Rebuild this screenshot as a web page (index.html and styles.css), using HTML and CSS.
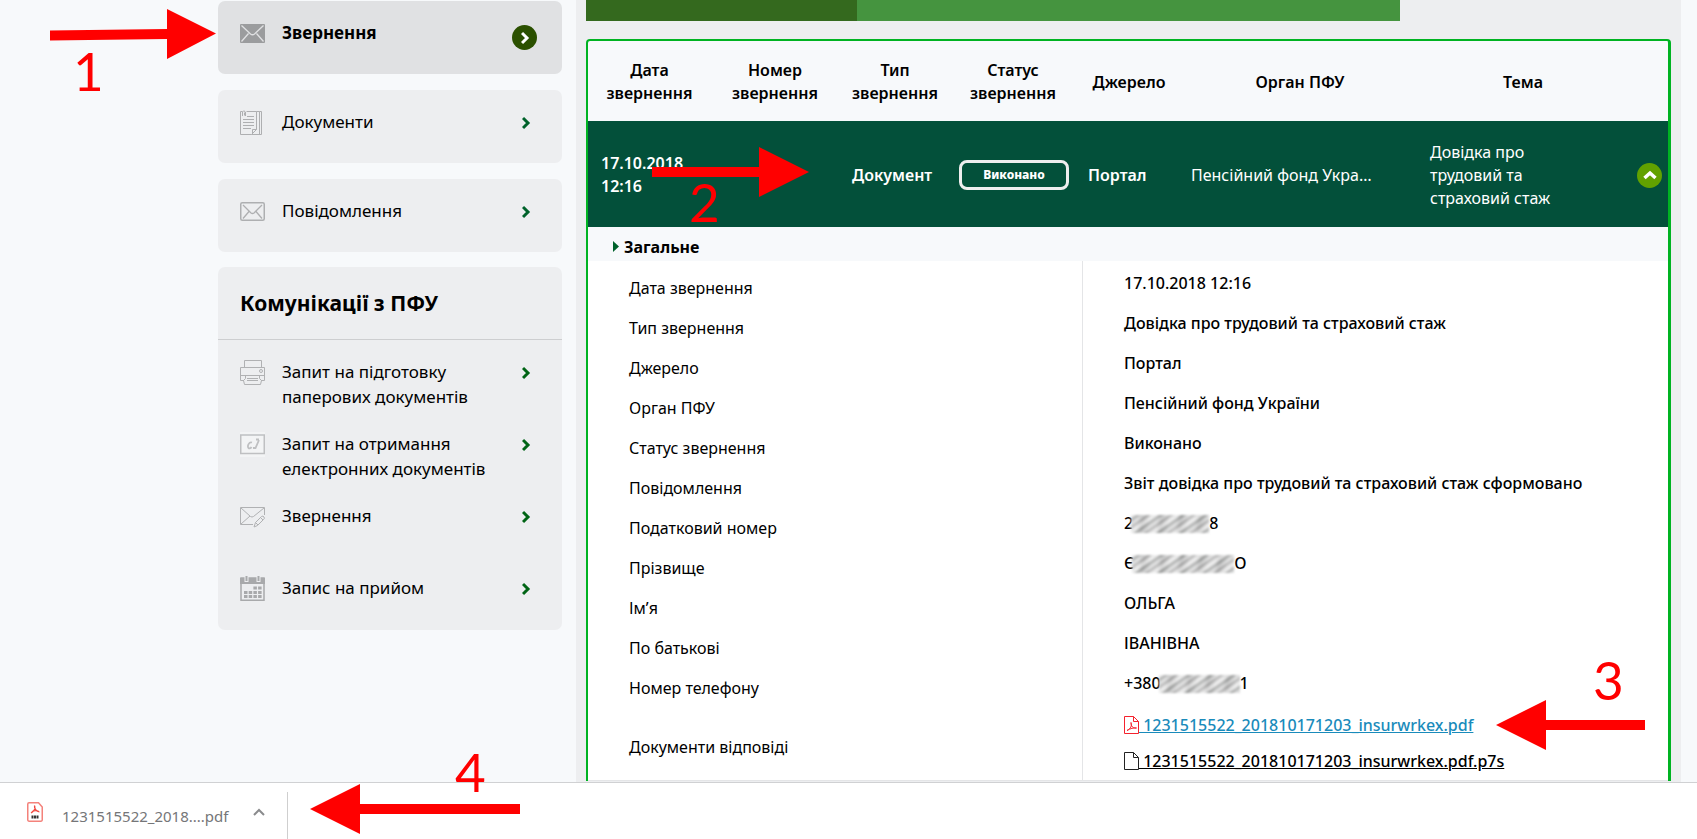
FILE: index.html
```html
<!DOCTYPE html>
<html lang="uk">
<head>
  <meta charset="UTF-8">
  <meta name="viewport" content="width=device-width, initial-scale=1.0">
  <title>Звернення</title>
  <link rel="stylesheet" href="styles.css">
</head>
<body>
  <div class="page">
    <aside class="sidebar">
      <nav class="menu">
        <a href="#" class="menu-card active">
          <svg class="icon" viewBox="0 0 25 25" width="25" height="25"><rect y="3" width="25" height="19" rx="1" fill="#9b9c9e"/><path d="M1.500 4.500l9 8.500q2 1.500 4 0l9-8.500M1.500 20.500l7-8M23.500 20.500l-7-8" fill="none" stroke="#e0e1e3" stroke-width="1.300"/></svg>
          <span class="label">Звернення</span>
          <span class="go round"><svg viewBox="0 0 9 14" width="9" height="14"><path d="M1 2l5 5-5 5" fill="none" stroke="#fff" stroke-width="3"/></svg></span>
        </a>
        <a href="#" class="menu-card">
          <svg class="icon" viewBox="0 0 25 25" width="25" height="25" fill="none" stroke="#aeafb1"><path d="M2.500 1.500h-2v23h11l5-5v-18H6.500"/><path d="M16.500 1.500h3v23h-8M19.500 1.500h2v23h-3M12.500 24v-4.500h4"/><path d="M3 9.500h11M3 12.500h11M3 15.500h11M3 18.500h8M7 6.500h7"/><path d="M2.500 6V2Q3.500-.5 5.500 2v4M4.500 2.500v3"/></svg>
          <span class="label">Документи</span>
          <span class="go"><svg viewBox="0 0 9 14" width="9" height="14"><path d="M1 2l5 5-5 5" fill="none" stroke="#00622b" stroke-width="3"/></svg></span>
        </a>
        <a href="#" class="menu-card">
          <svg class="icon" viewBox="0 0 25 25" width="25" height="25" fill="none" stroke="#aeafb1"><rect x=".75" y="3.750" width="23.500" height="17.500" rx="1.500" stroke-width="1.500"/><path d="M3 6l8 8q1.500 1 3 0l8-8M3 19.500l6-7M22 19.500l-6-7" stroke-width="1.300"/></svg>
          <span class="label">Повідомлення</span>
          <span class="go"><svg viewBox="0 0 9 14" width="9" height="14"><path d="M1 2l5 5-5 5" fill="none" stroke="#00622b" stroke-width="3"/></svg></span>
        </a>
      </nav>

      <section class="group">
        <h2>Комунікації з ПФУ</h2>
        <a href="#" class="group-item">
          <svg class="icon" viewBox="0 0 25 25" width="25" height="25" fill="none" stroke="#b0b1b3"><path d="M4.500 7V.5h17V7M4 20.500H.5v-13h24v13H21M.5 15.500h24"/><path d="M5.500 15.500v3l-2 2 1 4h16l1-4-2-2v-3"/><path d="M7 18.500h11M7 20.500h11"/><circle cx="21" cy="11" r="1.500"/></svg>
          <span class="label">Запит на підготовку паперових документів</span>
          <span class="go"><svg viewBox="0 0 9 14" width="9" height="14"><path d="M1 2l5 5-5 5" fill="none" stroke="#006415" stroke-width="3"/></svg></span>
        </a>
        <a href="#" class="group-item">
          <svg class="icon" viewBox="0 0 25 25" width="25" height="25" fill="none" stroke="#bfc0c2"><rect width="25" height="25" fill="#f3f4f5" stroke="none"/><rect x=".75" y="3" width="23.500" height="18.500" stroke-width="1.500"/><path d="M12 10.500c-3-1-5 3.500-3.500 5.500 1 1 2.500 0 3-1M19 8l-3.500 8h-2.500M16 7.500h3" stroke-width="1.800"/></svg>
          <span class="label">Запит на отримання електронних документів</span>
          <span class="go"><svg viewBox="0 0 9 14" width="9" height="14"><path d="M1 2l5 5-5 5" fill="none" stroke="#006415" stroke-width="3"/></svg></span>
        </a>
        <a href="#" class="group-item">
          <svg class="icon" viewBox="0 0 25 25" width="25" height="25" fill="none" stroke="#b0b1b3"><path d="M13 20.500H.5v-17h24V11M1 4l9.500 8.500q1.500 1 3 0L24 4M1 20l9-8"/><path d="M14 23l1.500-4.500 6-6q1.500-1 2.500.5t-.5 2.500l-6 6zM15.500 18.500l2.500 2.500M20.500 13.500l2.500 2.500"/></svg>
          <span class="label">Звернення</span>
          <span class="go"><svg viewBox="0 0 9 14" width="9" height="14"><path d="M1 2l5 5-5 5" fill="none" stroke="#006415" stroke-width="3"/></svg></span>
        </a>
        <a href="#" class="group-item">
          <svg class="icon" viewBox="0 0 25 25" width="25" height="25"><path d="M1 2h23v22.250H1z" fill="#edeef0" stroke="#a8a9ab" stroke-width="1.500"/><path d="M0 2h25v6H0z" fill="#a8a9ab"/><path d="M6.500 0v6M18.500 0v6" stroke="#edeef0" stroke-width="4"/><path d="M6.500 0v5M18.500 0v5" stroke="#a8a9ab" stroke-width="2"/><path d="M13.400 12h8.200M4 16.500h17.600M4 20.500h17.600" stroke="#a8a9ab" stroke-width="3" stroke-dasharray="3.500 1.200"/></svg>
          <span class="label">Запис на прийом</span>
          <span class="go"><svg viewBox="0 0 9 14" width="9" height="14"><path d="M1 2l5 5-5 5" fill="none" stroke="#006415" stroke-width="3"/></svg></span>
        </a>
      </section>
    </aside>

    <main class="content">
      <div class="tabs"><span class="tab-on"></span></div>

      <div class="panel">
        <table class="requests">
          <colgroup>
            <col class="c-date"><col class="c-num"><col class="c-type"><col class="c-status">
            <col class="c-source"><col class="c-organ"><col><col class="c-toggle">
          </colgroup>
          <thead>
            <tr>
              <th>Дата<br>звернення</th>
              <th>Номер<br>звернення</th>
              <th>Тип<br>звернення</th>
              <th>Статус<br>звернення</th>
              <th>Джерело</th>
              <th>Орган ПФУ</th>
              <th>Тема</th>
              <th></th>
            </tr>
          </thead>
          <tbody>
            <tr>
              <td class="strong">17.10.2018<br>12:16</td>
              <td></td>
              <td class="strong">Документ</td>
              <td class="narrow"><span class="status">Виконано</span></td>
              <td class="strong">Портал</td>
              <td class="narrow">Пенсійний фонд Укра…</td>
              <td>Довідка про<br>трудовий та<br>страховий стаж</td>
              <td class="narrow"><button class="toggle" aria-label="Згорнути"><svg viewBox="0 0 14 10" width="14" height="10"><path d="M1.500 8L7 3l5.500 5" fill="none" stroke="#fff" stroke-width="3.500"/></svg></button></td>
            </tr>
          </tbody>
        </table>

        <h3 class="section-title"><svg viewBox="0 0 6 11" width="6" height="11"><path d="M0 0l6 5.500L0 11z" fill="#00622b"/></svg>Загальне</h3>

        <dl class="details">
          <dt>Дата звернення</dt><dd>17.10.2018 12:16</dd>
          <dt>Тип звернення</dt><dd>Довідка про трудовий та страховий стаж</dd>
          <dt>Джерело</dt><dd>Портал</dd>
          <dt>Орган ПФУ</dt><dd>Пенсійний фонд України</dd>
          <dt>Статус звернення</dt><dd>Виконано</dd>
          <dt>Повідомлення</dt><dd>Звіт довідка про трудовий та страховий стаж сформовано</dd>
          <dt>Податковий номер</dt><dd>2<span class="smudge tax"></span>8</dd>
          <dt>Прізвище</dt><dd>Є<span class="smudge surname"></span>О</dd>
          <dt>Ім’я</dt><dd>ОЛЬГА</dd>
          <dt>По батькові</dt><dd>ІВАНІВНА</dd>
          <dt>Номер телефону</dt><dd>+380<span class="smudge phone"></span>1</dd>
          <dt class="files-label">Документи відповіді</dt>
          <dd class="files">
            <a href="#" class="file pdf"><svg viewBox="0 0 15 18" width="15" height="18" fill="none" stroke="#f5222d"><path d="M.5.5h9l5 5v12H.5zM9.500.5v5h5"/><path d="M3 14.500c4-2 5-5 4-8 0 4 2 6 5.500 5.500-3-.5-6 .5-9.500 2.500z"/></svg> 1231515522_201810171203_insurwrkex.pdf</a>
            <a href="#" class="file"><svg viewBox="0 0 15 18" width="15" height="18" fill="none" stroke="#222"><path d="M.5.5h9l5 5v12H.5zM9.500.5v5h5"/></svg> 1231515522_201810171203_insurwrkex.pdf.p7s</a>
          </dd>
        </dl>
      </div>
    </main>
  </div>

  <footer class="downloads">
    <a href="#" class="download">
      <svg viewBox="0 0 16 20" width="16" height="20"><path d="M2 .75h9.500L15.250 5v12.500a1.500 1.500 0 0 1-1.500 1.750H2.250A1.500 1.500 0 0 1 .75 17.500V2.250Q.75.75 2 .75z" fill="#fff" stroke="#f4827b" stroke-width="1.500"/><path d="M7.500 3.500c1.500 3-.5 5.500-3.500 7.500M7.500 3.500c-.5 3 2 6 5 6.500M5 9.500c2-1 5-1 7 0" fill="none" stroke="#f0473e" stroke-width="1.200"/><path d="M4.500 15h7" stroke="#333" stroke-width="3" stroke-dasharray="2 .5"/></svg>
      <span>1231515522_2018....pdf</span>
    </a>
    <button class="more" aria-label="Меню"><svg viewBox="0 0 12 8" width="12" height="8"><path d="M1 7l5-5 5 5" fill="none" stroke="#8a8b8d" stroke-width="2"/></svg></button>
  </footer>

  <!-- step pointers over the page -->
  <svg class="arrow arrow-1" viewBox="0 0 166 50" width="166" height="50"><path d="M0 21.500L117 20V0l49 24.500L117 50V30L0 31.500z"/></svg>
  <span class="step step-1">1</span>
  <svg class="arrow arrow-2" viewBox="0 0 157 50" width="157" height="50"><path d="M0 20h107V0l50 25-50 25V30H0z"/></svg>
  <span class="step step-2">2</span>
  <svg class="arrow arrow-3" viewBox="0 0 149 50" width="149" height="50"><path d="M149 20H50V0L0 25l50 25V30h99z"/></svg>
  <span class="step step-3">3</span>
  <svg class="arrow arrow-4" viewBox="0 0 210 50" width="210" height="50"><path d="M210 20H50V0L0 25l50 25V30h160z"/></svg>
  <span class="step step-4">4</span>
</body>
</html>
```
FILE: styles.css
```css
* {
  box-sizing: border-box;
}
body {
  margin: 0;
  height: 100vh;
  display: flex;
  flex-direction: column;
  overflow: hidden;
  position: relative;
  background: #f7f9fb;
  color: #000;
  font-family: "Noto Sans", "Open Sans", sans-serif;
  font-size: 16px;
}
a {
  color: inherit;
  text-decoration: none;
}
.page {
  flex: 1;
  min-height: 0;
  display: flex;
  overflow: hidden;
  padding: 0 16px 0 218px;
}

/* sidebar */
.sidebar {
  flex: 0 0 344px;
  margin-right: 14px;
  padding-top: 1px;
  font-size: 17px;
}
.menu {
  display: flex;
  flex-direction: column;
  gap: 16px;
}
.menu-card,
.group-item {
  display: flex;
  align-items: flex-start;
  gap: 17px;
  padding: 19px 31px 0 22px;
  line-height: 25px;
}
.menu-card {
  height: 73px;
  border-radius: 7px;
  background: #edeef0;
}
.menu-card.active {
  background: #e0e1e3;
  font-weight: 700;
}
.icon {
  flex: none;
  margin-top: 1px;
}
.label {
  flex: 1;
}
.go {
  display: flex;
  padding-top: 7px;
}
.go.round {
  width: 25px;
  height: 25px;
  margin: 5px -6px 0 0;
  padding: 0 0 0 2px;
  align-items: center;
  justify-content: center;
  border-radius: 50%;
  background: #2b5000;
}
.group {
  margin-top: 15px;
  padding-bottom: 2px;
  border-radius: 7px;
  background: #edeef0;
}
.group h2 {
  margin: 0;
  padding: 22px;
  border-bottom: 1px solid #cdced0;
  font-size: 21px;
  line-height: 28px;
}
.group-item {
  height: 72px;
}

/* content */
.content {
  flex: 1;
  min-width: 0;
  padding: 0 10px;
  background: #edeef0;
}
.tabs {
  width: 75%;
  height: 21px;
  display: flex;
  background: #45943f;
}
.tab-on {
  width: 33.33%;
  background: #34691e;
}
.panel {
  margin-top: 18px;
  border: solid #00b322;
  border-width: 2px 3px 0 2px;
  border-radius: 4px 4px 0 0;
  background: #f7f9fb;
}
.requests {
  width: 100%;
  table-layout: fixed;
  border-collapse: collapse;
  line-height: 23px;
}
.c-date { width: 123px; }
.c-num { width: 128px; }
.c-type { width: 112px; }
.c-status { width: 124px; }
.c-source { width: 108px; }
.c-organ { width: 234px; }
.c-toggle { width: 39px; }
.requests th {
  height: 80px;
  padding: 2px 0 0;
  font-weight: 600;
}
.requests td {
  height: 106px;
  padding: 2px 0 0 13px;
  background: #03503a;
  color: #fff;
}
.requests td.strong {
  font-weight: 600;
}
.requests td.narrow {
  padding-left: 8px;
}
.status {
  display: block;
  width: 110px;
  height: 30px;
  border: 3px solid #eee;
  border-radius: 8px;
  font-size: 12px;
  font-weight: 800;
  line-height: 23px;
  text-align: center;
}
.toggle {
  display: flex;
  width: 25px;
  height: 25px;
  padding: 0;
  align-items: center;
  justify-content: center;
  border: 0;
  border-radius: 50%;
  background: #62a100;
}
.section-title {
  display: flex;
  align-items: center;
  gap: 5px;
  height: 34px;
  margin: 0;
  padding: 5px 25px 0;
  font-size: 16px;
}
.details {
  display: grid;
  grid-template-columns: 495px 1fr;
  margin: 0;
  border-bottom: 1px solid #e4e5e7;
  background: #fff;
  line-height: 24px;
}
.details dt {
  padding: 15px 0 0 41px;
  border-right: 1px solid #e4e5e7;
}
.details dd {
  height: 40px;
  margin: 0;
  padding: 10px 0 0 41px;
  font-weight: 500;
}
.details .files-label {
  padding-top: 34px;
}
.details .files {
  height: 79px;
  padding-top: 12px;
}
.file {
  display: block;
  height: 36px;
  text-decoration: underline;
}
.file.pdf {
  color: #1a8bbb;
}
.file svg {
  vertical-align: -3px;
}
.smudge {
  display: inline-block;
  height: 18px;
  margin: 0 0 0 -2px;
  vertical-align: -4px;
  background:
    repeating-linear-gradient(97deg, #fff4 0 7px, #7772 12px, #fff3 19px),
    repeating-linear-gradient(145deg, #e6e6e6 0 2px, #8b8d8c 4px, #c8c9c9 6px, #dcdcdc 8px, #9a9a9a 10px, #eee 13px);
  filter: blur(1px);
}
.smudge.tax { width: 78px; }
.smudge.surname { width: 102px; }
.smudge.phone { width: 81px; }

/* downloads bar */
.downloads {
  flex: 0 0 57px;
  display: flex;
  padding: 9px 0 0 27px;
  border-top: 1px solid #d0d1d3;
  background: #fff;
  color: #757678;
  font-size: 15px;
}
.download {
  display: flex;
  align-items: center;
  gap: 19px;
}
.download svg {
  margin-bottom: 8px;
}
.more {
  margin-left: 8px;
  padding: 0 22px 8px 17px;
  border: 0;
  border-right: 1px solid #cfcfcf;
  background: none;
}

/* pointers */
.arrow,
.step {
  position: absolute;
}
.arrow {
  fill: #f00;
}
.step {
  color: #f00;
  font-family: Lato, sans-serif;
  font-size: 53px;
  line-height: 53px;
}
.arrow-1 { left: 50px; top: 9px; }
.arrow-2 { left: 652px; top: 147px; }
.arrow-3 { left: 1496px; top: 700px; }
.arrow-4 { left: 310px; top: 784px; }
.step-1 { left: 73px; top: 44px; }
.step-2 { left: 689px; top: 175px; }
.step-3 { left: 1593px; top: 653px; }
.step-4 { left: 455px; top: 745px; }
```
